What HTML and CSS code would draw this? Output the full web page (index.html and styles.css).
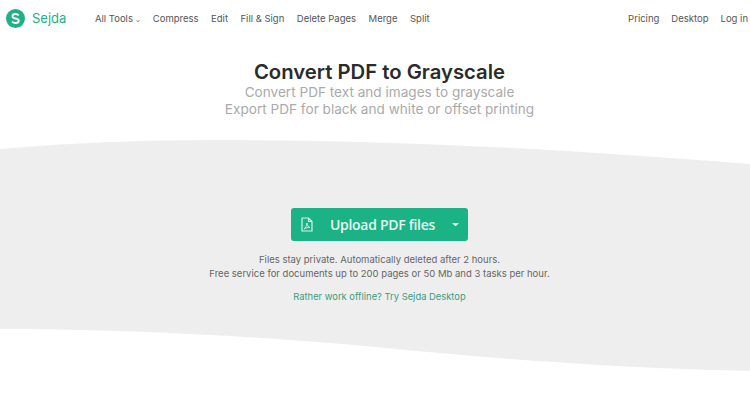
FILE: index.html
```html
<!DOCTYPE html>
<html lang="en">
<head>
<meta charset="utf-8">
<title>Convert PDF to Grayscale</title>
<link rel="stylesheet" href="styles.css">
</head>
<body>
<header class="nav">
  <a class="logo">
    <svg class="logo-mark" viewBox="0 0 20 20" aria-hidden="true"><circle cx="10" cy="10" r="10" fill="#1bb286"/><path d="M13.4 6.6C12.6 5.7 11.4 5.300 10 5.300c-1.900 0-3.200 1-3.200 2.400 0 3.200 6.600 1.500 6.600 4.700 0 1.400-1.400 2.400-3.400 2.400-1.500 0-2.800-.5-3.700-1.500" fill="none" stroke="#fff" stroke-width="2"/></svg>
    <span class="logo-text">Sejda</span>
  </a>
  <nav class="nav-main">
    <a>All Tools <span class="caret">⌄</span></a>
    <a>Compress</a>
    <a>Edit</a>
    <a>Fill &amp; Sign</a>
    <a>Delete Pages</a>
    <a>Merge</a>
    <a>Split</a>
  </nav>
  <nav class="nav-side">
    <a>Pricing</a>
    <a>Desktop</a>
    <a>Log in</a>
  </nav>
</header>
<section class="intro">
  <h1>Convert PDF to Grayscale</h1>
  <p>Convert PDF text and images to grayscale</p>
  <p>Export PDF for black and white or offset printing</p>
</section>
<main class="band">
  <svg class="wave" viewBox="0 0 750 233" preserveAspectRatio="none" aria-hidden="true"><path d="M0 10C70 4 140 1 215 1 400 1 560 10 750 25V232C620 229 520 222 375 208 280 199 140 190 0 190Z" fill="#eeeeee"/></svg>
  <div class="band-content">
    <button class="upload">
      <svg class="pdf-icon" viewBox="0 0 12 15" aria-hidden="true"><path d="M1 1h6.500L11 4.500V14H1Z M7.500 1v3.500H11" fill="none" stroke="#d5f3ea" stroke-width="1.200"/><path d="M3 12c1.500-1 2.800-3.500 3-6 .3 2.500 1.300 4 3 4.500-2-.2-4 .3-6 1.500Z" fill="none" stroke="#d5f3ea" stroke-width=".9"/></svg>
      <span class="upload-label">Upload PDF files</span>
      <svg class="upload-caret" viewBox="0 0 8 4" aria-hidden="true"><path d="M0 0h8L4 4Z" fill="#d5f3ea"/></svg>
    </button>
    <p class="note">Files stay private. Automatically deleted after 2 hours.<br>Free service for documents up to 200 pages or 50 Mb and 3 tasks per hour.</p>
    <a class="offline">Rather work offline? Try Sejda Desktop</a>
  </div>
</main>
</body>
</html>
```
FILE: styles.css
```css
* { box-sizing: border-box; }
html, body { margin: 0; height: 404px; overflow: hidden; background: #fff; }
body { font-family: "Inter", "Liberation Sans", sans-serif; color: #555; }
a { color: inherit; text-decoration: none; }

.nav { display: flex; align-items: center; height: 36px; padding: 0 2px 0 6px; font-size: 9.5px; color: #555; }
.logo { display: flex; align-items: center; gap: 7px; width: 89px; }
.logo-mark { width: 19px; height: 19px; margin-top: 1px; }
.logo-text { font-size: 13px; color: #1bb286; }
.nav-main { display: flex; gap: 12.5px; }
.nav-side { display: flex; gap: 12px; margin-left: auto; }
.caret { font-size: 6px; }

.intro { text-align: center; padding: 25px 0 0 9px; height: 103px; }
.intro h1 { margin: 0 0 1px; font-size: 20.3px; line-height: 22px; font-weight: 600; color: #2b2b2b; }
.intro p { margin: 0; font-size: 13.6px; line-height: 17px; color: #aaa; }

.band { position: relative; height: 233px; }
.wave { position: absolute; inset: 0; width: 100%; height: 100%; }
.band-content { position: relative; display: flex; flex-direction: column; align-items: center; padding: 69px 0 0 9px; }
.upload { display: flex; align-items: center; width: 177px; height: 33px; padding: 0 9px 0 10px; border: 0; border-radius: 3px; background: #1bb286; color: #e4f7f1; font: 600 14px "Open Sans", "Liberation Sans", sans-serif; letter-spacing: -.3px; }
.pdf-icon { width: 12px; height: 15px; }
.upload-label { margin-left: 17px; flex: 1; text-align: left; white-space: nowrap; }
.upload-caret { width: 7px; height: 3.500px; }
.note { margin: 12px 0 0; text-align: center; font-size: 9.5px; line-height: 14px; color: #666; }
.offline { margin-top: 9px; font-size: 9.4px; line-height: 14px; color: #3d9c80; }
```
